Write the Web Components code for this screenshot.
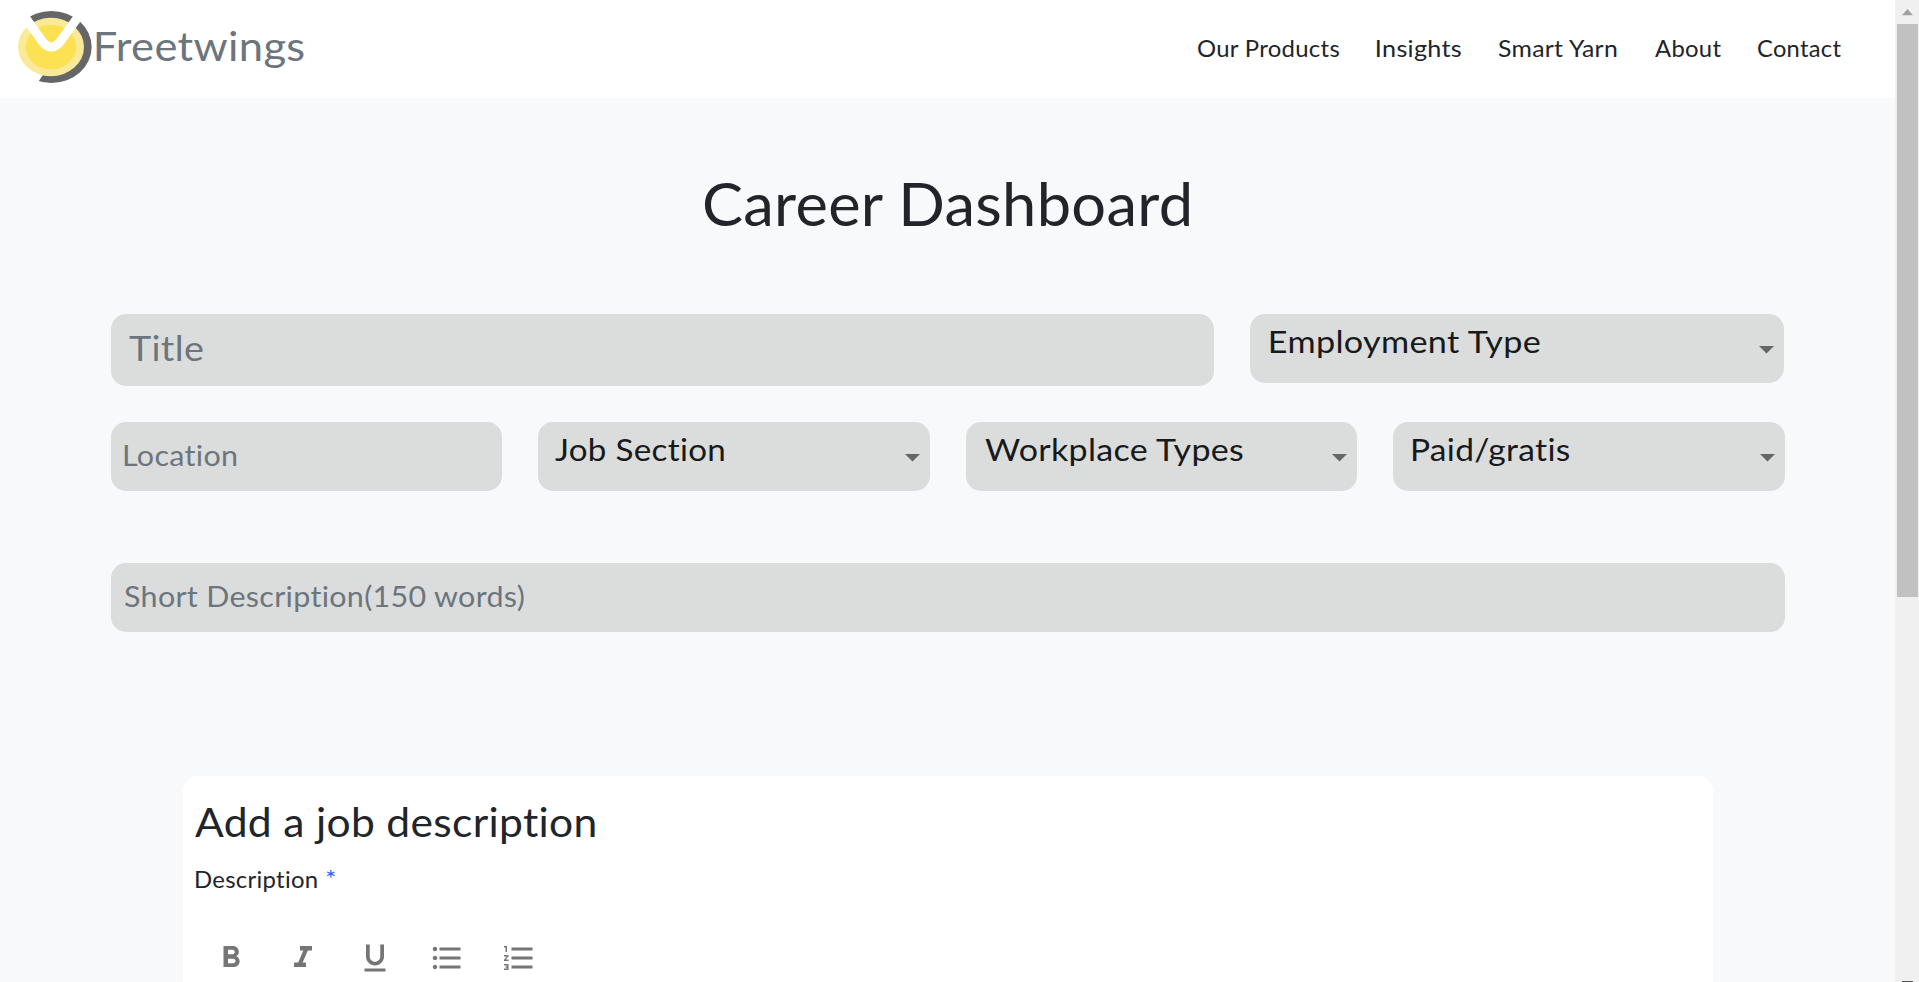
<!DOCTYPE html>
<html lang="en">
<head>
<meta charset="utf-8">
<title>Career Dashboard</title>
<style>
html,body{margin:0;height:100%;overflow:hidden;background:#f8f9fb;font-family:Lato,"Open Sans",sans-serif;color:#212529}
</style>
</head>
<body>
<career-app></career-app>
<script>
const ctx = document.createElement('canvas').getContext('2d');

/* Text whose drawn width is set by its "width" attribute. */
class FitText extends HTMLElement {
  connectedCallback() {
    const size = +this.getAttribute('size'), width = +this.getAttribute('width');
    const root = this.attachShadow({mode: 'open'});
    ctx.font = `${size}px Lato`;
    ctx.letterSpacing = '0.3px';
    const m = ctx.measureText(this.textContent);
    const scale = width / (m.actualBoundingBoxRight + m.actualBoundingBoxLeft);
    root.innerHTML = `<style>
      :host{display:block;flex:none;width:${width}px;height:${size * 1.2}px;font:${size}px/1.2 Lato,"Open Sans",sans-serif;white-space:nowrap;letter-spacing:.3px;font-variant-ligatures:none}
      span{display:inline-block;transform-origin:0 0;transform:scaleX(${scale}) translateX(${m.actualBoundingBoxLeft}px)}
    </style><span><slot></slot></span>`;
  }
}
customElements.define('fit-text', FitText);

const define = (name, html) => customElements.define(name, class extends HTMLElement {
  constructor() { super(); this.attachShadow({mode: 'open'}).innerHTML = html; }
});

define('brand-logo', `<style>:host{display:block;width:90px;height:86px}svg{display:block}</style>
<svg width="90" height="86" viewBox="0 0 270 258">
  <ellipse cx="124" cy="129" rx="121" ry="108" fill="#666"/>
  <path d="M0 0H34L124 128L98 214L78 244H0Z" fill="#fff"/>
  <ellipse cx="123" cy="129" rx="99" ry="87.500" fill="#fae997"/>
  <ellipse cx="123" cy="129" rx="75" ry="67" fill="#fce153"/>
  <path d="M33 24L98 114Q124 144 150 114L215 24" fill="none" stroke="#fff" stroke-width="27"/>
</svg>`);

define('site-header', `<style>
:host{display:flex;height:98px;background:#fff;align-items:flex-start}
brand-logo{margin:4px 0 0 10px}
.name{margin:21.700px 0 0 -4px;color:#6c757d}
nav{display:flex;margin:34px 53.500px 0 auto}
.n1{margin-right:37.500px}.n2{margin-right:36.500px}.n3{margin-right:37px}.n4{margin-right:37px}
</style>
<brand-logo></brand-logo><fit-text class="name" size="40.6" width="207.5">Freetwings</fit-text>
<nav><fit-text class="n1" size="23.6" width="142">Our Products</fit-text><fit-text class="n2" size="23.6" width="84.500">Insights</fit-text><fit-text class="n3" size="23.6" width="119.500">Smart Yarn</fit-text><fit-text class="n4" size="23.6" width="66.500">About</fit-text><fit-text size="23.6" width="83.500">Contact</fit-text></nav>`);

define('text-field', `<style>
:host{display:flex;box-sizing:border-box;height:69px;border-radius:15px;background:#dbdddc;color:#6c757d;padding:14.5px 0 0 12.500px}
</style><slot></slot>`);

define('select-field', `<style>
:host{display:flex;box-sizing:border-box;height:69px;border-radius:15px;background:#dbdddc;color:#18191b;padding:7.500px 10.5px 0 19px;justify-content:space-between}
svg{display:block;margin-top:24.500px}
</style><slot></slot><svg width="15" height="8"><path d="M0 0H15L7.5 7.5Z" fill="#666"/></svg>`);

define('tool-icon', `<style>:host{display:block;width:36px;height:36px;color:#757575}</style><slot></slot>`);

define('description-card', `<style>
:host{display:block;box-sizing:border-box;width:1530px;height:300px;border-radius:15px 15px 0 0;background:#fff;padding:21px 0 0 13px}
.head{margin-left:-1px}
.row{display:flex;gap:8.5px;margin-top:18.200px}
.star{color:#2962ff;margin-top:-.5px}
.tools{display:flex;gap:36px;margin:47px 0 0 17px}
svg{display:block}
</style>
<fit-text class="head" size="41.5" width="400">Add a job description</fit-text>
<div class="row"><fit-text size="23.6" width="121">Description</fit-text><fit-text class="star" size="24" width="9">*</fit-text></div>
<div class="tools">
<tool-icon><svg width="36" height="36" viewBox="0 0 24 24" fill="currentColor"><path d="M15.6 10.79c.97-.67 1.65-1.77 1.65-2.79 0-2.26-1.75-4-4-4H7v14h7.04c2.09 0 3.71-1.7 3.71-3.79 0-1.52-.86-2.82-2.15-3.42zM10 6.5h3c.83 0 1.5.67 1.5 1.5s-.67 1.5-1.5 1.5h-3v-3zm3.5 9H10v-3h3.5c.83 0 1.5.67 1.5 1.5s-.67 1.5-1.5 1.5z"/></svg></tool-icon>
<tool-icon><svg width="36" height="36" viewBox="0 0 24 24" fill="currentColor"><path d="M10 4v3h2.21l-3.42 8H6v3h8v-3h-2.21l3.42-8H18V4z"/></svg></tool-icon>
<tool-icon><svg width="36" height="36" viewBox="0 0 24 24" fill="currentColor"><path d="M12 17c3.31 0 6-2.69 6-6V3h-2.5v8c0 1.93-1.57 3.5-3.5 3.5S8.500 12.930 8.500 11V3H6v8c0 3.310 2.690 6 6 6zm-7 2v2h14v-2H5z"/></svg></tool-icon>
<tool-icon><svg width="36" height="36" viewBox="0 0 24 24" fill="currentColor"><path d="M4 10.500c-.83 0-1.500.67-1.500 1.500s.67 1.500 1.500 1.500 1.500-.67 1.500-1.500-.67-1.500-1.500-1.500zm0-6c-.83 0-1.500.67-1.500 1.500S3.170 7.500 4 7.500 5.500 6.830 5.500 6 4.830 4.500 4 4.500zm0 12c-.83 0-1.500.68-1.500 1.500s.68 1.500 1.500 1.500 1.500-.68 1.500-1.500-.67-1.500-1.500-1.500zM7 19h14v-2H7v2zm0-6h14v-2H7v2zm0-8v2h14V5H7z"/></svg></tool-icon>
<tool-icon><svg width="36" height="36" viewBox="0 0 24 24" fill="currentColor"><path d="M2 17h2v.5H3v1h1v.5H2v1h3v-4H2v1zm1-9h1V4H2v1h1v3zm-1 3h1.800L2 13.100v.9h3v-1H3.200L5 10.900V10H2v1zm5-6v2h14V5H7zm0 14h14v-2H7v2zm0-6h14v-2H7v2z"/></svg></tool-icon>
</div>`);

define('page-scrollbar', `<style>
:host{display:flex;flex-direction:column;width:24px;height:982px;background:#f0f0f0;flex:none}
svg{display:block;margin:9px 0 0 7px}
.thumb{width:21px;height:573px;margin:8px 0 0 2px;background:#c1c1c1}
.down{width:11px;height:1px;margin:auto 0 0 7px;background:#505050}
</style><svg width="11" height="7"><path d="M5.500 0L11 6.300H0Z" fill="#a0a0a0"/></svg><div class="thumb"></div><div class="down"></div>`);

define('career-app', `<style>
:host{display:flex;height:982px;overflow:hidden}
.page{width:1895px;height:982px;overflow:hidden}
.title{box-sizing:border-box;height:72px;margin:70px 0 0 703.500px}
.grid{display:grid;margin-left:111px;width:1674px;column-gap:36px}
.g1{grid-template-columns:1103px 534px;align-items:start;height:72px;margin-top:74px}
.g2{grid-template-columns:391px 392px 391px 392px;margin-top:36px}
.big{height:72px;padding:12.900px 0 0 17.600px}
.job{margin-left:-2.500px}
.emp{margin-left:1px}
.short{margin:72px 0 0 111px;width:1674px}
description-card{margin:144px 0 0 183px}
</style>
<div class="page">
<site-header></site-header>
<fit-text class="title" size="59.3" width="487">Career Dashboard</fit-text>
<div class="grid g1">
<text-field class="big"><fit-text size="35.500" width="74">Title</fit-text></text-field>
<select-field><fit-text class="emp" size="31.800" width="271">Employment Type</fit-text></select-field>
</div>
<div class="grid g2">
<text-field><fit-text size="29.500" width="112.500">Location</fit-text></text-field>
<select-field><fit-text class="job" size="31.800" width="169">Job Section</fit-text></select-field>
<select-field><fit-text size="31.800" width="259">Workplace Types</fit-text></select-field>
<select-field><fit-text size="31.800" width="157.500">Paid/gratis</fit-text></select-field>
</div>
<text-field class="short"><fit-text size="29.500" width="400.500">Short Description(150 words)</fit-text></text-field>
<description-card></description-card>
</div>
<page-scrollbar></page-scrollbar>`);
</script>
</body>
</html>
